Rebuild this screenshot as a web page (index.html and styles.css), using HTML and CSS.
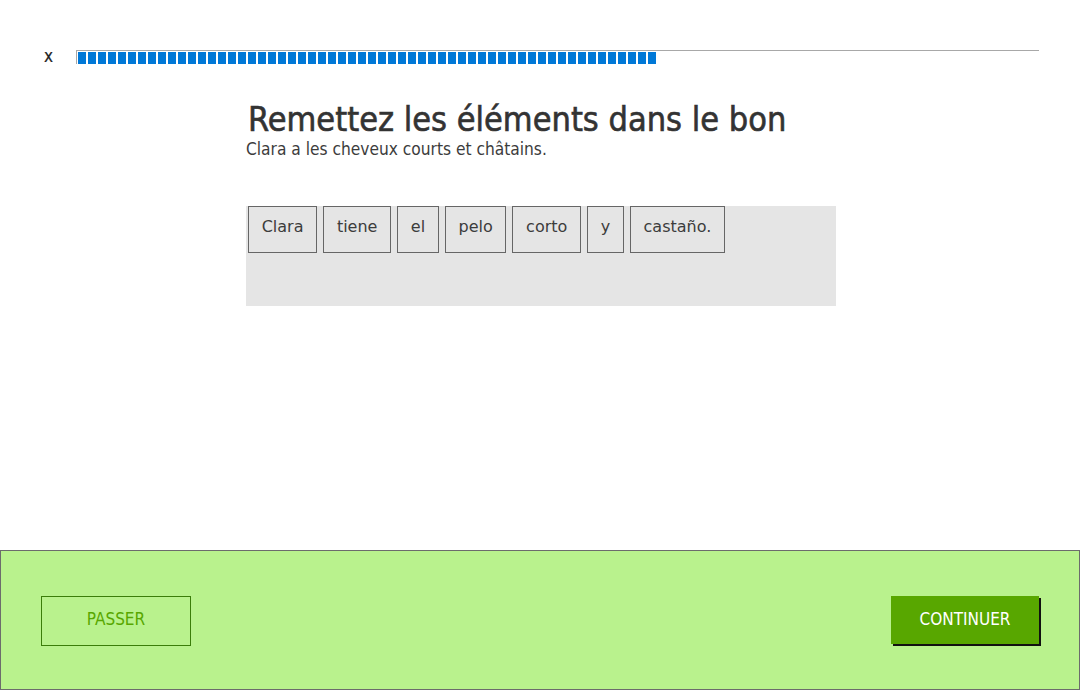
FILE: index.html
```html
<!DOCTYPE html>
<html lang="fr">
<head>
<meta charset="utf-8">
<title>Exercice</title>
<link rel="stylesheet" href="styles.css">
</head>
<body>
<div class="page">
  <div class="topbar">
    <span class="close">x</span>
    <div class="progress">
      <div class="segments" id="segs"></div>
    </div>
  </div>
  <main class="content">
    <h1 class="title">Remettez les éléments dans le bon</h1>
    <p class="subtitle">Clara a les cheveux courts et châtains.</p>
    <div class="answer">
      <span class="tile">Clara</span>
      <span class="tile">tiene</span>
      <span class="tile">el</span>
      <span class="tile">pelo</span>
      <span class="tile">corto</span>
      <span class="tile">y</span>
      <span class="tile">castaño.</span>
    </div>
  </main>
  <footer class="footer">
    <button class="btn btn-skip">PASSER</button>
    <button class="btn btn-continue">CONTINUER</button>
  </footer>
</div>
<script>
  var s = document.getElementById('segs');
  for (var i = 0; i < 58; i++) { var d = document.createElement('span'); d.className = 'seg'; s.appendChild(d); }
</script>
</body>
</html>
```
FILE: styles.css
```css
html, body {
  margin: 0;
  padding: 0;
  background: #fff;
}
body {
  font-family: "DejaVu Sans", sans-serif;
  font-stretch: condensed;
  color: #3c3c3c;
  width: 1080px;
  height: 690px;
  overflow: hidden;
}
.page {
  display: flex;
  flex-direction: column;
  height: 690px;
}
.topbar {
  display: flex;
  align-items: flex-start;
  padding: 50px 41px 0 44px;
  height: 16px;
}
.close {
  font-size: 17px;
  line-height: 14px;
  width: 32px;
  margin-top: -1px;
  color: #222;
  -webkit-text-stroke: 0.2px #222;
}
.progress {
  flex: 1;
  border-top: 1px solid #a8a8a8;
  border-left: 1px solid #a8a8a8;
  padding: 1px 0 0 1px;
  height: 14px;
  box-sizing: border-box;
}
.segments {
  display: flex;
  gap: 2px;
}
.seg {
  width: 8px;
  height: 12px;
  background: #0078d7;
}
.content {
  width: 590px;
  margin-left: 246px;
  padding-top: 34px;
  flex: 1;
}
.title {
  margin: 0;
  font-size: 34px;
  font-weight: normal;
  line-height: 38px;
  padding-left: 2px;
  color: #333;
  -webkit-text-stroke: 0.6px #333;
}
.subtitle {
  margin: 1px 0 0;
  font-size: 17.2px;
  line-height: 20px;
  color: #3c3c3c;
}
.answer {
  margin-top: 47px;
  background: #e5e5e5;
  height: 100px;
  display: flex;
  flex-wrap: wrap;
  align-content: flex-start;
  gap: 6px;
  padding-left: 2px;
}
.tile {
  border: 1px solid #666;
  padding: 11px 12.7px 16px;
  font-size: 16px;
  font-stretch: normal;
  line-height: 18px;
  color: #3c3c3c;
}
.footer {
  height: 140px;
  box-sizing: border-box;
  background: #b9f28d;
  border: 1px solid #6c6c6c;
  display: flex;
  justify-content: space-between;
  align-items: center;
  padding: 0 38px 0 40px;
}
.btn {
  width: 150px;
  height: 50px;
  font-family: "DejaVu Sans", sans-serif;
  font-stretch: condensed;
  font-size: 17px;
  cursor: pointer;
  margin-top: 2px;
  padding: 0 0 4px;
}
.btn-skip {
  background: transparent;
  border: 1px solid #3b7d0a;
  color: #58a700;
}
.btn-continue {
  background: #58a700;
  border: none;
  color: #fff;
  box-shadow: 2px 2px 0 #111;
  width: 148px;
  height: 48px;
  margin-right: 2px;
  margin-top: 0;
  padding-bottom: 2px;
}
```
